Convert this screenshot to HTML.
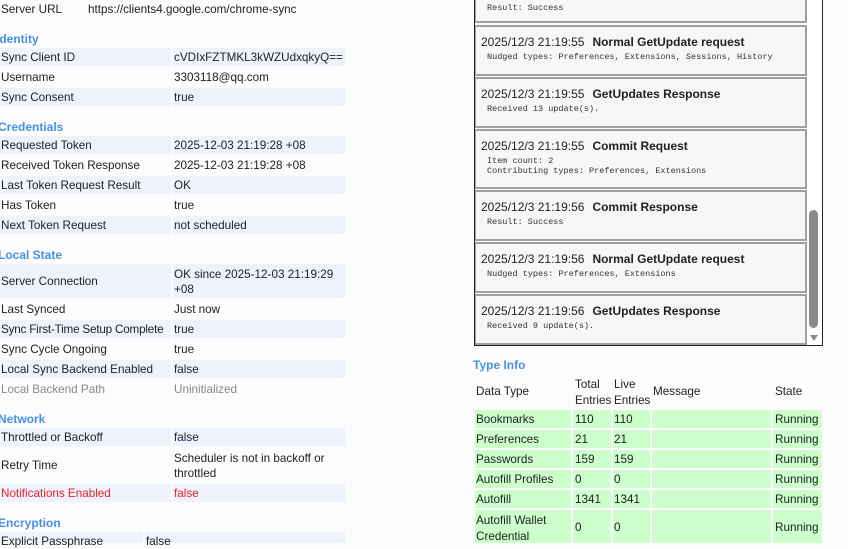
<!DOCTYPE html>
<html><head><meta charset="utf-8"><style>
*{margin:0;padding:0;box-sizing:border-box}
body{width:848px;height:543px;overflow:hidden;background:#fcfcfd;font-family:"Liberation Sans",sans-serif;font-size:11.7px;color:#222;position:relative}
.a{position:absolute;white-space:nowrap;line-height:14px}
.h{position:absolute;color:#4a90e2;font-weight:bold;font-size:12px;left:-2px}
.bg{position:absolute;background:#eef2fc}
.g{color:#888}.r{color:#e22}
.ev{position:absolute;left:475px;width:332px;background:#f7f7f7;border:2px solid #a0a0a0;border-left:1px solid #a0a0a0}
.ev .t{position:absolute;left:5px;top:8px;font-size:12px;white-space:nowrap}
.ev .t b{margin-left:8px}
.ev .d{position:absolute;left:11px;top:25px;font-family:"Liberation Mono",monospace;font-size:8.5px;line-height:10px;white-space:pre;color:#333}
.c{position:absolute;background:#ccffcc}
</style></head><body>
<div class="a" style="left:1px;top:3px">Server URL</div><div class="a" style="left:88px;top:3px">https://clients4.google.com/chrome-sync</div>

<div class="h" style="top:32px;left:-4px">Identity</div>
<div class="bg" style="left:0;top:48px;width:171px;height:18px"></div><div class="bg" style="left:173px;top:48px;width:172px;height:18px"></div>
<div class="a" style="left:1px;top:51px">Sync Client ID</div><div class="a" style="left:174px;top:51px">cVDIxFZTMKL3kWZUdxqkyQ==</div>
<div class="a" style="left:1px;top:71px">Username</div><div class="a" style="left:174px;top:71px">3303118@qq.com</div>
<div class="bg" style="left:0;top:88px;width:171px;height:18px"></div><div class="bg" style="left:173px;top:88px;width:172px;height:18px"></div>
<div class="a" style="left:1px;top:91px">Sync Consent</div><div class="a" style="left:174px;top:91px">true</div>

<div class="h" style="top:120px">Credentials</div>
<div class="bg" style="left:0;top:136px;width:171px;height:18px"></div><div class="bg" style="left:173px;top:136px;width:172px;height:18px"></div>
<div class="a" style="left:1px;top:139px">Requested Token</div><div class="a" style="left:174px;top:139px">2025-12-03 21:19:28 +08</div>
<div class="a" style="left:1px;top:159px">Received Token Response</div><div class="a" style="left:174px;top:159px">2025-12-03 21:19:28 +08</div>
<div class="bg" style="left:0;top:176px;width:171px;height:18px"></div><div class="bg" style="left:173px;top:176px;width:172px;height:18px"></div>
<div class="a" style="left:1px;top:179px">Last Token Request Result</div><div class="a" style="left:174px;top:179px">OK</div>
<div class="a" style="left:1px;top:199px">Has Token</div><div class="a" style="left:174px;top:199px">true</div>
<div class="bg" style="left:0;top:216px;width:171px;height:18px"></div><div class="bg" style="left:173px;top:216px;width:172px;height:18px"></div>
<div class="a" style="left:1px;top:219px">Next Token Request</div><div class="a" style="left:174px;top:219px">not scheduled</div>

<div class="h" style="top:248px">Local State</div>
<div class="bg" style="left:0;top:264px;width:171px;height:34px"></div><div class="bg" style="left:173px;top:264px;width:172px;height:34px"></div>
<div class="a" style="left:1px;top:275px">Server Connection</div><div class="a" style="left:174px;top:267px;line-height:15px">OK since 2025-12-03 21:19:29<br>+08</div>
<div class="a" style="left:1px;top:303px">Last Synced</div><div class="a" style="left:174px;top:303px">Just now</div>
<div class="bg" style="left:0;top:320px;width:171px;height:18px"></div><div class="bg" style="left:173px;top:320px;width:172px;height:18px"></div>
<div class="a" style="left:1px;top:323px;letter-spacing:-0.2px">Sync First-Time Setup Complete</div><div class="a" style="left:174px;top:323px">true</div>
<div class="a" style="left:1px;top:343px">Sync Cycle Ongoing</div><div class="a" style="left:174px;top:343px">true</div>
<div class="bg" style="left:0;top:360px;width:171px;height:18px"></div><div class="bg" style="left:173px;top:360px;width:172px;height:18px"></div>
<div class="a" style="left:1px;top:363px">Local Sync Backend Enabled</div><div class="a" style="left:174px;top:363px">false</div>
<div class="a g" style="left:1px;top:383px">Local Backend Path</div><div class="a g" style="left:174px;top:383px">Uninitialized</div>

<div class="h" style="top:412px">Network</div>
<div class="bg" style="left:0;top:428px;width:171px;height:18px"></div><div class="bg" style="left:173px;top:428px;width:172px;height:18px"></div>
<div class="a" style="left:1px;top:431px">Throttled or Backoff</div><div class="a" style="left:174px;top:431px">false</div>
<div class="a" style="left:1px;top:459px">Retry Time</div><div class="a" style="left:174px;top:451px;line-height:15px">Scheduler is not in backoff or<br>throttled</div>
<div class="bg" style="left:0;top:484px;width:171px;height:18px"></div><div class="bg" style="left:173px;top:484px;width:172px;height:18px"></div>
<div class="a r" style="left:1px;top:487px">Notifications Enabled</div><div class="a r" style="left:174px;top:487px">false</div>

<div class="h" style="top:516px">Encryption</div>
<div class="bg" style="left:0;top:532px;width:143px;height:11px"></div><div class="bg" style="left:145px;top:532px;width:200px;height:11px"></div>
<div class="a" style="left:1px;top:535px">Explicit Passphrase</div><div class="a" style="left:146px;top:535px">false</div>

<!-- events box -->
<div style="position:absolute;left:474px;top:-2px;width:349px;height:348px;border:1px solid #222;background:#fff"></div>
<div class="ev" style="top:-30px;height:53px"><div class="d" style="top:31px">Result: Success</div></div>
<div class="ev" style="top:25px;height:51px"><div class="t">2025/12/3 21:19:55<b>Normal GetUpdate request</b></div><div class="d">Nudged types: Preferences, Extensions, Sessions, History</div></div>
<div class="ev" style="top:77px;height:51px"><div class="t">2025/12/3 21:19:55<b>GetUpdates Response</b></div><div class="d">Received 13 update(s).</div></div>
<div class="ev" style="top:129px;height:60px"><div class="t">2025/12/3 21:19:55<b>Commit Request</b></div><div class="d">Item count: 2
Contributing types: Preferences, Extensions</div></div>
<div class="ev" style="top:190px;height:51px"><div class="t">2025/12/3 21:19:56<b>Commit Response</b></div><div class="d">Result: Success</div></div>
<div class="ev" style="top:242px;height:51px"><div class="t">2025/12/3 21:19:56<b>Normal GetUpdate request</b></div><div class="d">Nudged types: Preferences, Extensions</div></div>
<div class="ev" style="top:294px;height:51px"><div class="t">2025/12/3 21:19:56<b>GetUpdates Response</b></div><div class="d">Received 9 update(s).</div></div>
<div style="position:absolute;left:809px;top:210px;width:9px;height:118px;background:#8a8a8a;border-radius:5px"></div>
<div style="position:absolute;left:810px;top:335px;width:0;height:0;border-left:4px solid transparent;border-right:4px solid transparent;border-top:6px solid #8a8a8a"></div>

<!-- type info -->
<div class="h" style="left:473px;top:358px">Type Info</div>
<div class="a" style="left:476px;top:385px">Data Type</div>
<div class="a" style="left:575px;top:377px;line-height:16px">Total<br>Entries</div>
<div class="a" style="left:614px;top:377px;line-height:16px">Live<br>Entries</div>
<div class="a" style="left:653px;top:385px">Message</div>
<div class="a" style="left:775px;top:385px">State</div>

<div class="c" style="left:475px;top:410px;width:96px;height:18px"></div><div class="c" style="left:573px;top:410px;width:38px;height:18px"></div><div class="c" style="left:613px;top:410px;width:37px;height:18px"></div><div class="c" style="left:652px;top:410px;width:119px;height:18px"></div><div class="c" style="left:773px;top:410px;width:49px;height:18px"></div>
<div class="c" style="left:475px;top:430px;width:96px;height:18px"></div><div class="c" style="left:573px;top:430px;width:38px;height:18px"></div><div class="c" style="left:613px;top:430px;width:37px;height:18px"></div><div class="c" style="left:652px;top:430px;width:119px;height:18px"></div><div class="c" style="left:773px;top:430px;width:49px;height:18px"></div>
<div class="c" style="left:475px;top:450px;width:96px;height:18px"></div><div class="c" style="left:573px;top:450px;width:38px;height:18px"></div><div class="c" style="left:613px;top:450px;width:37px;height:18px"></div><div class="c" style="left:652px;top:450px;width:119px;height:18px"></div><div class="c" style="left:773px;top:450px;width:49px;height:18px"></div>
<div class="c" style="left:475px;top:470px;width:96px;height:18px"></div><div class="c" style="left:573px;top:470px;width:38px;height:18px"></div><div class="c" style="left:613px;top:470px;width:37px;height:18px"></div><div class="c" style="left:652px;top:470px;width:119px;height:18px"></div><div class="c" style="left:773px;top:470px;width:49px;height:18px"></div>
<div class="c" style="left:475px;top:490px;width:96px;height:18px"></div><div class="c" style="left:573px;top:490px;width:38px;height:18px"></div><div class="c" style="left:613px;top:490px;width:37px;height:18px"></div><div class="c" style="left:652px;top:490px;width:119px;height:18px"></div><div class="c" style="left:773px;top:490px;width:49px;height:18px"></div>
<div class="c" style="left:475px;top:510px;width:96px;height:33px"></div><div class="c" style="left:573px;top:510px;width:38px;height:33px"></div><div class="c" style="left:613px;top:510px;width:37px;height:33px"></div><div class="c" style="left:652px;top:510px;width:119px;height:33px"></div><div class="c" style="left:773px;top:510px;width:49px;height:33px"></div>

<div class="a" style="left:476px;top:413px">Bookmarks</div><div class="a" style="left:575px;top:413px">110</div><div class="a" style="left:614px;top:413px">110</div><div class="a" style="left:775px;top:413px">Running</div>
<div class="a" style="left:476px;top:433px">Preferences</div><div class="a" style="left:575px;top:433px">21</div><div class="a" style="left:614px;top:433px">21</div><div class="a" style="left:775px;top:433px">Running</div>
<div class="a" style="left:476px;top:453px">Passwords</div><div class="a" style="left:575px;top:453px">159</div><div class="a" style="left:614px;top:453px">159</div><div class="a" style="left:775px;top:453px">Running</div>
<div class="a" style="left:476px;top:473px">Autofill Profiles</div><div class="a" style="left:575px;top:473px">0</div><div class="a" style="left:614px;top:473px">0</div><div class="a" style="left:775px;top:473px">Running</div>
<div class="a" style="left:476px;top:493px">Autofill</div><div class="a" style="left:575px;top:493px">1341</div><div class="a" style="left:614px;top:493px">1341</div><div class="a" style="left:775px;top:493px">Running</div>
<div class="a" style="left:476px;top:513px;line-height:16px">Autofill Wallet<br>Credential</div><div class="a" style="left:575px;top:521px">0</div><div class="a" style="left:614px;top:521px">0</div><div class="a" style="left:775px;top:521px">Running</div>
</body></html>
